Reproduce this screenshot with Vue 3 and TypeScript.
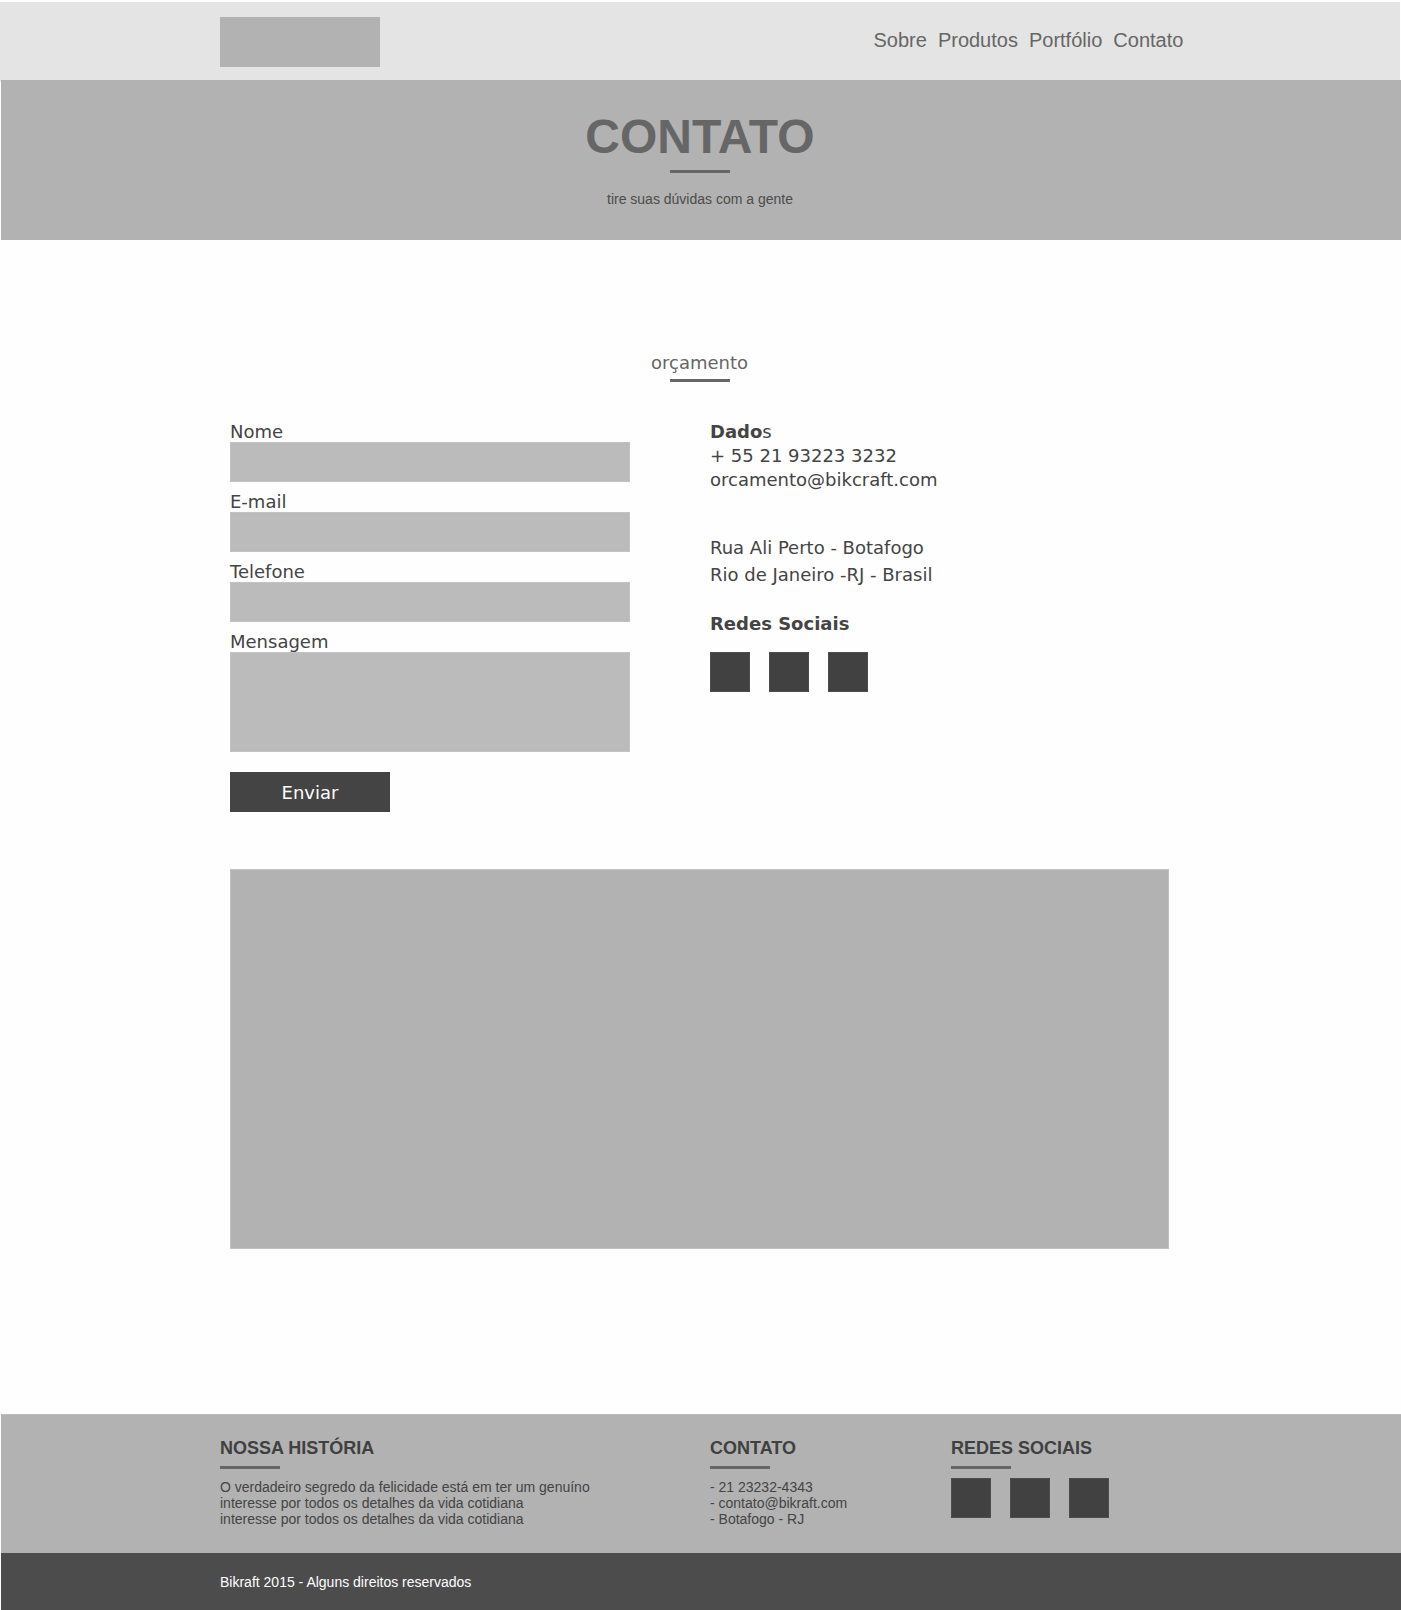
<script setup lang="ts">
import { reactive } from 'vue'

interface Field {
  id: 'nome' | 'email' | 'telefone'
  label: string
  type: string
}

const menu: string[] = ['Sobre', 'Produtos', 'Portfólio', 'Contato']
const networks: string[] = ['Facebook', 'Instagram', 'Twitter']
const fields: Field[] = [
  { id: 'nome', label: 'Nome', type: 'text' },
  { id: 'email', label: 'E-mail', type: 'email' },
  { id: 'telefone', label: 'Telefone', type: 'tel' },
]
const form = reactive({ nome: '', email: '', telefone: '', mensagem: '' })
</script>

<template>
  <div class="page">
    <header class="header">
      <div class="container header-inner">
        <a class="logo" href="#" aria-label="Bikcraft"></a>
        <nav class="menu">
          <a v-for="item in menu" :key="item" href="#">{{ item }}</a>
        </nav>
      </div>
    </header>

    <section class="hero">
      <h1>CONTATO</h1>
      <div class="rule"></div>
      <p>tire suas dúvidas com a gente</p>
    </section>

    <main class="container main">
      <h2 class="section-title">orçamento</h2>
      <div class="rule"></div>

      <div class="columns">
        <form class="form" @submit.prevent>
          <div v-for="f in fields" :key="f.id" class="field">
            <label :for="f.id">{{ f.label }}</label>
            <input :id="f.id" v-model="form[f.id]" :type="f.type" />
          </div>
          <div class="field">
            <label for="mensagem">Mensagem</label>
            <textarea id="mensagem" v-model="form.mensagem"></textarea>
          </div>
          <button type="submit">Enviar</button>
        </form>

        <div class="data">
          <h3><b>Dado</b>s</h3>
          <p class="contact">+ 55 21 93223 3232<br />orcamento@bikcraft.com</p>
          <p class="address">Rua Ali Perto - Botafogo<br />Rio de Janeiro -RJ - Brasil</p>
          <h3><b>Redes Sociais</b></h3>
          <div class="social">
            <a v-for="n in networks" :key="n" href="#" :aria-label="n"></a>
          </div>
        </div>
      </div>

      <div class="map"></div>
    </main>

    <footer>
      <div class="footer-top">
        <div class="container footer-grid">
          <section>
            <h3>NOSSA HISTÓRIA</h3>
            <div class="rule"></div>
            <p>
              O verdadeiro segredo da felicidade está em ter um genuíno<br />
              interesse por todos os detalhes da vida cotidiana<br />
              interesse por todos os detalhes da vida cotidiana
            </p>
          </section>
          <section>
            <h3>CONTATO</h3>
            <div class="rule"></div>
            <p>- 21 23232-4343<br />- contato@bikraft.com<br />- Botafogo - RJ</p>
          </section>
          <section>
            <h3>REDES SOCIAIS</h3>
            <div class="rule"></div>
            <div class="social">
              <a v-for="n in networks" :key="n" href="#" :aria-label="n"></a>
            </div>
          </section>
        </div>
      </div>
      <div class="copyright">
        <p class="container">Bikraft 2015 - Alguns direitos reservados</p>
      </div>
    </footer>
  </div>
</template>

<style>
body {
  background: #fefefe;
}
</style>

<style scoped>
.page {
  padding-top: 2px;
  color: #444;
  font-family: 'Liberation Sans', Arial, sans-serif;
  font-size: 14px;
  line-height: 16px;
}
.page * {
  box-sizing: border-box;
}
h1,
h2,
h3,
p {
  margin: 0;
}
a {
  text-decoration: none;
}
.container {
  max-width: 961px;
  margin: 0 auto;
}
.rule {
  width: 60px;
  height: 3px;
  background: #666;
}

.header {
  margin-right: 1px;
  padding: 15px 0;
  background: #e4e4e4;
}
.header-inner {
  display: grid;
  grid-template-columns: 654px 1fr;
}
.logo {
  width: 160px;
  height: 50px;
  background: #b2b2b2;
}
.menu {
  display: flex;
  gap: 11px;
  padding-top: 11px;
  font-size: 20px;
  line-height: 24px;
}
.menu a {
  color: #666;
}

.hero {
  display: flex;
  flex-direction: column;
  align-items: center;
  margin: -2px 0 0 1px;
  padding: 33px 2px 33px 0;
  background: #b2b2b2;
}
.hero h1 {
  color: #666;
  font-size: 48px;
  line-height: 48px;
}
.hero .rule {
  margin: 9px 0 18px;
}
.hero p {
  color: #4c4c4c;
}

.main {
  padding: 113px 12px 165px 10px;
  font-family: 'DejaVu Sans', Verdana, sans-serif;
  font-size: 18px;
  line-height: 20px;
}
.section-title {
  color: #666;
  font-size: 18px;
  font-weight: 400;
  text-align: center;
}
.main > .rule {
  margin: 6px auto 40px;
}
.columns {
  display: grid;
  grid-template-columns: 400px 1fr;
  gap: 80px;
}
.form {
  display: flex;
  flex-direction: column;
  gap: 10px;
}
.field {
  display: flex;
  flex-direction: column;
}
.field input,
.field textarea {
  width: 100%;
  height: 40px;
  margin: 0;
  padding: 8px;
  border: 1px solid #c2c2c2;
  border-radius: 0;
  background: #bbb;
  color: #444;
  font: inherit;
  resize: none;
}
.field textarea {
  height: 100px;
}
.form button {
  width: 160px;
  height: 40px;
  margin-top: 10px;
  padding: 2px 0 0;
  border: 0;
  background: #444;
  color: #fff;
  font: inherit;
}
.data h3 {
  font-size: 18px;
  font-weight: 400;
}
.contact {
  margin-top: 2px;
  line-height: 24px;
}
.address {
  margin: 42px 0 26px;
  line-height: 27px;
}
.social {
  display: flex;
  gap: 19px;
}
.data .social {
  margin-top: 18px;
}
.social a {
  width: 40px;
  height: 40px;
  border: 1px solid #4c4c4c;
  background: #414141;
}
.map {
  height: 380px;
  margin-top: 57px;
  border: 1px solid #c2c2c2;
  background: #b2b2b2;
}

footer {
  margin-left: 1px;
}
.footer-top {
  padding: 23px 1px 25px 0;
  border-top: 1px solid #bbb;
  background: #b2b2b2;
}
.footer-grid {
  display: grid;
  grid-template-columns: 490px 241px 1fr;
}
.footer-grid h3 {
  color: #404040;
  font-size: 18px;
  line-height: 20px;
}
.footer-grid .rule {
  margin: 8px 0 9px;
}
.footer-grid p {
  padding: 1px 0;
}
.copyright {
  padding: 21px 1px 20px 0;
  background: #4c4c4c;
  color: #fff;
}
</style>
